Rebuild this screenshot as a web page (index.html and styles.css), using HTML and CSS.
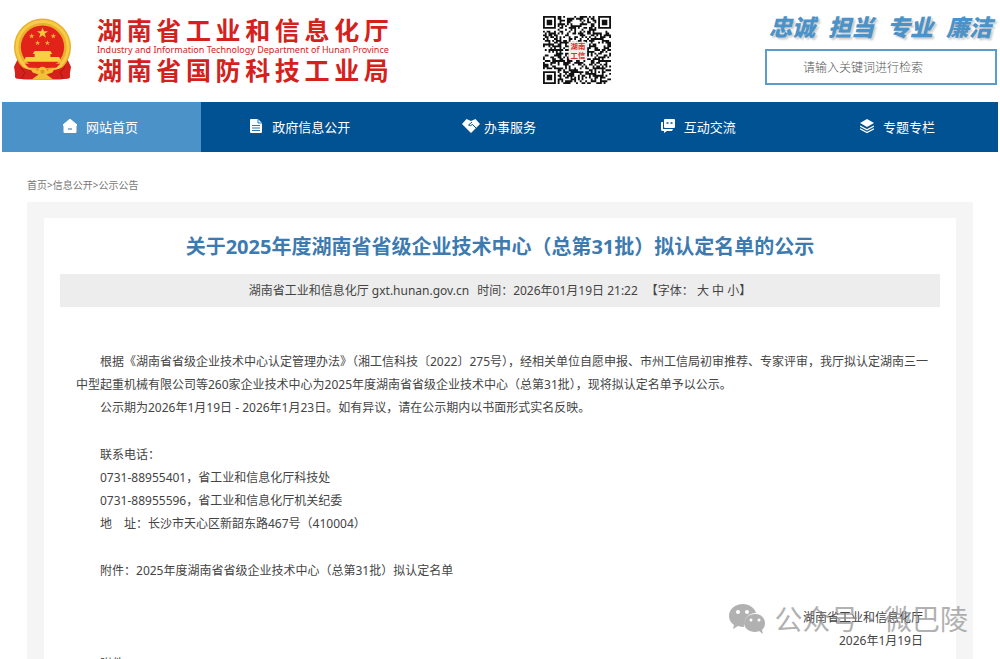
FILE: index.html
```html
<!DOCTYPE html>
<html lang="zh-CN">

<head>
    <meta charset="UTF-8">
    <meta name="viewport" content="width=device-width, initial-scale=1">
    <title>湖南省工业和信息化厅</title>
    <link rel="stylesheet" href="styles.css">
</head>

<body>
    <header class="header">
        <div class="brand">
            <svg class="emblem" viewBox="0 0 60 64" aria-hidden="true">
                <path d="M5 41 L1 49 L3 61 L14 62 L46 62 L57 61 L59 49 L55 41 Z" fill="#d5201c" />
                <circle cx="30" cy="29" r="29" fill="#e9b02c" />
                <circle cx="30" cy="29" r="26" fill="none" stroke="#f6cc48" stroke-width="3" />
                <circle cx="30" cy="29" r="22" fill="#e2231a" />
                <path d="M30 9l1.400 4h4.200l-3.400 2.500 1.300 4-3.500-2.400-3.500 2.400 1.300-4-3.400-2.500h4.200z" fill="#f5c93c" />
                <g fill="#f0b530">
                    <path id="star" d="M19 15l.700 2h2l-1.600 1.200.6 2-1.700-1.200-1.700 1.200.6-2-1.600-1.200h2z" />
                    <use href="#star" x="22" />
                    <use href="#star" x="6" y="7" />
                    <use href="#star" x="16" y="7" />
                </g>
                <path d="M22 33h16l2 3h-2v3h9l2 5H11l2-5h9v-3h-2z" fill="#f8d040" />
                <path d="M12 46h36l-4 4H16z" fill="#e2231a" />
                <path d="M3 46q12 8 22 6l5-3 5 3q10 2 22-6l1 14q-8 3-14 1H16q-6 2-14-1z" fill="#d5201c" />
                <path d="M17 50l9 3 4-4 4 4 9-3-3 5-6 2 7 5H19l7-5-6-2z" fill="#f3c136" />
                <circle cx="30" cy="54" r="5" fill="#f3c136" />
                <circle cx="30" cy="54" r="2" fill="#d79a22" />
                <path d="M7 49l5 6-3 6M53 49l-5 6 3 6" fill="none" stroke="#a81512" />
            </svg>
            <div class="brand-text">
                <div class="brand-name">湖南省工业和信息化厅</div>
                <div class="brand-en">Industry and Information Technology Department of Hunan Province</div>
                <div class="brand-name">湖南省国防科技工业局</div>
            </div>
        </div>

        <svg class="qr" viewBox="0 0 37 37" role="img" aria-label="湖南工信二维码">
            <path id="qr-dots" fill="#111" />
            <rect x="14" y="14" width="10" height="10" rx="1" fill="#f1efee" />
            <text x="19" y="18" class="qr-text">湖南</text>
            <text x="19" y="23" class="qr-text">工信</text>
        </svg>

        <div class="header-right">
            <div class="slogan">
                <span>忠诚</span>
                <span>担当</span>
                <span>专业</span>
                <span>廉洁</span>
            </div>
            <input class="search" type="text" placeholder="请输入关键词进行检索" aria-label="请输入关键词进行检索">
        </div>
    </header>

    <nav class="nav">
        <a class="active" href="#">
            <svg class="icon" viewBox="0 0 14 14">
                <path d="M7 0l7 6-1 1v6a1 1 0 0 1-1 1H2a1 1 0 0 1-1-1V7L0 6z" fill="#fff" stroke="#fff" stroke-linejoin="round" />
                <path d="M5 10h4" stroke="#4b92c8" stroke-width="1.300" />
            </svg>
            网站首页
        </a>
        <a href="#">
            <svg class="icon" viewBox="0 0 14 14">
                <path d="M2 0h7l4 4v9a1 1 0 0 1-1 1H2a1 1 0 0 1-1-1V1a1 1 0 0 1 1-1z" fill="#fff" />
                <path d="M9 0v4h4M3 6.500h8M3 9h8M3 11.500h8" fill="none" stroke="#005293" stroke-width=".8" />
            </svg>
            政府信息公开
        </a>
        <a class="tight" href="#">
            <svg class="icon icon-wide" viewBox="0 0 18 14">
                <path d="M4.500 0L0 5l9 9 9-9-4.500-5L9 2z" fill="#fff" />
                <path d="M10 3L6.500 6q2 1.500 4-.5l4 4" fill="none" stroke="#005293" />
            </svg>
            办事服务
        </a>
        <a href="#">
            <svg class="icon" viewBox="0 0 14 14">
                <path d="M4 0h9a1 1 0 0 1 1 1v7a1 1 0 0 1-1 1H4a1 1 0 0 1-1-1V1a1 1 0 0 1 1-1z" fill="#fff" />
                <path d="M2 3H1a1 1 0 0 0-1 1v7l1 1h2v2l3-2h5l1-2H2z" fill="#fff" />
                <path d="M5.500 4h2M9.500 4h2" stroke="#005293" stroke-width="1.300" />
            </svg>
            互动交流
        </a>
        <a href="#">
            <svg class="icon" viewBox="0 0 14 14">
                <path d="M7 0l7 4-7 4-7-4z" fill="#fff" />
                <path d="M0 7l7 3.700L14 7M0 9.800l7 3.700 7-3.700" fill="none" stroke="#fff" stroke-width="1.300" />
            </svg>
            专题专栏
        </a>
    </nav>

    <div class="crumbs"><a href="#">首页</a>&gt;<a href="#">信息公开</a>&gt;<a href="#">公示公告</a></div>

    <main class="panel">
        <article class="article">
            <h1>关于2025年度湖南省省级企业技术中心（总第31批）拟认定名单的公示</h1>
            <div class="meta">
                <span>湖南省工业和信息化厅 gxt.hunan.gov.cn</span>
                <span>时间：2026年01月19日 21:22</span>
                <span>【字体： <a href="#">大</a> <a href="#">中</a> <a href="#">小</a>】</span>
            </div>

            <div class="content">
                <div class="block">
                    <p>根据《湖南省省级企业技术中心认定管理办法》（湘工信科技〔2022〕275号），经相关单位自愿申报、市州工信局初审推荐、专家评审，我厅拟认定湖南三一中型起重机械有限公司等260家企业技术中心为2025年度湖南省省级企业技术中心（总第31批），现将拟认定名单予以公示。</p>
                    <p>公示期为2026年1月19日 - 2026年1月23日。如有异议，请在公示期内以书面形式实名反映。</p>
                </div>

                <div class="block">
                    <p>联系电话：</p>
                    <p>0731-88955401，省工业和信息化厅科技处</p>
                    <p>0731-88955596，省工业和信息化厅机关纪委</p>
                    <p>地　址：长沙市天心区新韶东路467号（410004）</p>
                </div>

                <div class="block">
                    <p>附件：<a href="#">2025年度湖南省省级企业技术中心（总第31批）拟认定名单</a></p>
                </div>

                <div class="sign">
                    <p>湖南省工业和信息化厅</p>
                    <p>2026年1月19日</p>
                    <div class="watermark">
                        <svg viewBox="0 0 36 30" aria-hidden="true">
                            <path d="M14 0C6 0 0 5 0 12c0 4 2 7 5 9l-1 4 5-3q3 1 6 1C14 14 20 9 27 9 26 4 20 0 14 0z" fill="#888" />
                            <path d="M26 10c-6 0-11 4-11 9s5 9 11 9q2 0 4-1l4 3-1-4c2-2 3-4 3-7 0-5-4-9-10-9z" fill="#888" />
                            <g fill="#fff">
                                <circle cx="9" cy="8" r="2" />
                                <circle cx="18" cy="8" r="2" />
                                <circle cx="22" cy="16" r="1.500" />
                                <circle cx="30" cy="16" r="1.500" />
                            </g>
                        </svg>
                        <span>公众号</span>
                        <span>·</span>
                        <span>微巴陵</span>
                    </div>
                </div>

                <div class="block">
                    <p>附件</p>
                </div>
            </div>
        </article>
    </main>

    <script src="qr.js"></script>
</body>

</html>
```
FILE: styles.css
```css
* {
    box-sizing: border-box;
}

body {
    margin: 0;
    background: #fff;
    color: #444;
    font-family: "Noto Sans", "Noto Sans CJK SC", sans-serif;
    font-size: 12px;
}

a {
    color: inherit;
    text-decoration: none;
}

p {
    margin: 0;
}

/* header */
.header {
    display: flex;
    justify-content: space-between;
    align-items: center;
    padding: 14px 3px 17px 13px;
}

.brand {
    display: flex;
    gap: 25px;
}

.emblem {
    width: 59px;
    height: 64px;
}

.brand-text {
    color: #d3221c;
}

.brand-name {
    font-size: 25px;
    font-weight: bold;
    line-height: 24px;
    text-align-last: justify;
}

.brand-en {
    font-size: 9px;
    line-height: 16px;
    white-space: nowrap;
}

.qr {
    width: 68px;
    height: 68px;
}

.qr-text {
    font-size: 4px;
    font-weight: bold;
    text-anchor: middle;
    fill: #d8312b;
}

.header-right {
    width: 232px;
}

.slogan {
    display: flex;
    justify-content: space-between;
    margin-bottom: 9px;
    padding: 0 5px 0 4px;
    color: #4b92c8;
    font-size: 23px;
    font-weight: 900;
    font-style: italic;
    line-height: 26px;
    text-shadow: 2px 2px 2px #ccc;
}

.search {
    display: block;
    width: 100%;
    height: 36px;
    padding: 0 36px;
    border: 2px solid #5a9dcd;
    background: #fff;
    font-family: inherit;
    font-size: 12px;
}

.search::placeholder {
    color: #555;
    font-weight: 300;
}

/* nav */
.nav {
    display: flex;
    margin: 0 2px;
    background: #005293;
}

.nav a {
    display: flex;
    flex: 1;
    justify-content: center;
    align-items: center;
    gap: 9px;
    height: 50px;
    padding: 0 2px 2px 0;
    color: #fff;
    font-size: 13px;
}

.nav a.active {
    background: #4b92c8;
}

.nav a.tight {
    gap: 4px;
}

.icon {
    width: 14px;
    height: 14px;
}

.icon-wide {
    width: 18px;
}

.crumbs {
    margin: 23px 27px 7px;
    color: #777;
    font-size: 10px;
    line-height: 20px;
}

/* article */
.panel {
    margin: 0 27px;
    padding: 16px 17px;
    background: #f5f5f5;
}

.article {
    padding: 14px 16px 20px;
    background: #fff;
}

h1 {
    margin: 0 0 12px;
    color: #3d7ab0;
    font-size: 20px;
    line-height: 30px;
    text-align: center;
}

.meta {
    display: flex;
    justify-content: center;
    gap: 8px;
    background: #ededed;
    line-height: 33px;
}

.content {
    margin-top: 43px;
    padding: 0 8px 0 16px;
    line-height: 23px;
}

.block {
    margin-bottom: 24px;
}

.block p {
    text-indent: 2em;
}

.sign {
    position: relative;
    padding-right: 9px;
    text-align: right;
}

.watermark {
    position: absolute;
    top: -4px;
    right: -36px;
    display: flex;
    align-items: center;
    gap: 9px;
    color: #888;
    font-size: 28px;
    line-height: 34px;
    white-space: nowrap;
    opacity: 0.65;
}

.watermark svg {
    width: 36px;
    height: 30px;
}
```
FILE: qr.js
```js
const size = 37;
let seed = 20260119;

const random = () => {
    seed = (seed * 1103515245 + 12345) % 2147483648;
    return seed / 2147483648;
};

// square ring pattern round a centre, null when the cell is outside it
const ring = (x, y, cx, cy, radius) => {
    const d = Math.max(Math.abs(x - cx), Math.abs(y - cy));
    if (d > radius + 1) return null;
    if (radius === 3) return d === 3 || d <= 1;
    return d === 2 || d === 0;
};

let path = "";
for (let y = 0; y < size; y++) {
    for (let x = 0; x < size; x++) {
        let dark = random() > 0.48;
        [[3, 3, 3], [33, 3, 3], [3, 33, 3], [30, 30, 1]].forEach(([cx, cy, r]) => {
            const cell = ring(x, y, cx, cy, r);
            if (cell !== null) dark = cell;
        });
        if (dark) path += `M${x} ${y}h1v1h-1z`;
    }
}
document.getElementById("qr-dots").setAttribute("d", path);
```
